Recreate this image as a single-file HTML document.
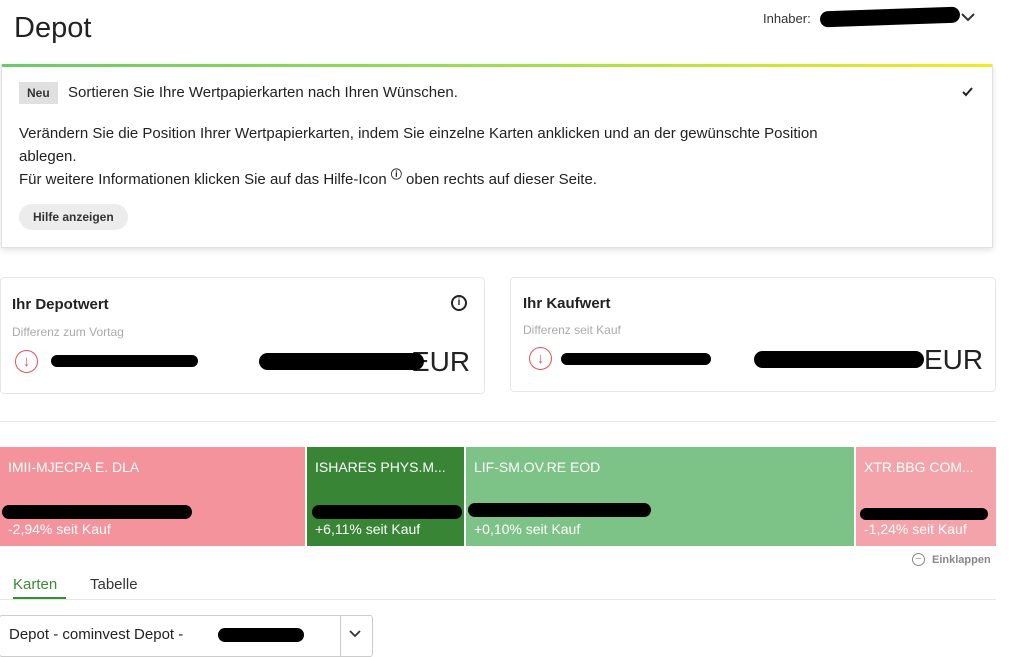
<!DOCTYPE html>
<html><head><meta charset="utf-8"><style>
body{margin:0;width:1026px;height:650px;background:#fff;font-family:"Liberation Sans",sans-serif;color:#222;position:relative;overflow:hidden}
.a{position:absolute}
.blk{position:absolute;background:#000;border-radius:10px}
.tile{position:absolute;top:447px;height:99px;color:#fff;font-size:14px}
.tile .n{position:absolute;left:8px;top:12px}
.tile .p{position:absolute;left:8px;top:74px}
</style></head><body>
<div class="a" style="left:14px;top:12px;font-size:29px;color:#222">Depot</div>
<div class="a" style="left:763px;top:11px;font-size:13px;color:#333">Inhaber:</div>
<div class="blk" style="left:820px;top:9px;width:140px;height:16px;transform:rotate(-2deg)"></div>
<svg class="a" style="left:961px;top:12px" width="14" height="10"><path d="M1 2l6 6 6-6" stroke="#333" stroke-width="2" fill="none"/></svg>

<div class="a" style="left:1px;top:64px;width:990px;height:183px;border:1px solid #e2e2e2;border-top:none;box-shadow:0 2px 6px rgba(0,0,0,.12)">
<div style="height:3px;background:linear-gradient(90deg,#6cc96a,#a0dd50,#f3ea22)"></div>
<div class="a" style="left:17px;top:18px;background:#e0e0e0;font-size:12px;font-weight:bold;padding:4px 8px;color:#333">Neu</div>
<div class="a" style="left:66px;top:20px;font-size:15px">Sortieren Sie Ihre Wertpapierkarten nach Ihren Wünschen.</div>
<svg class="a" style="left:959px;top:22px" width="14" height="12"><path d="M2 6l3 3 6-7" stroke="#222" stroke-width="2" fill="none"/></svg>
<div class="a" style="left:17px;top:58px;font-size:15px;line-height:23px;width:960px">Verändern Sie die Position Ihrer Wertpapierkarten, indem Sie einzelne Karten anklicken und an der gewünschte Position<br>ablegen.<br>Für weitere Informationen klicken Sie auf das Hilfe-Icon <sup style="font-size:11px;font-weight:bold;line-height:0">&#9432;</sup> oben rechts auf dieser Seite.</div>
<div class="a" style="left:17px;top:140px;background:#ececec;border-radius:14px;padding:6px 14px;font-size:12px;font-weight:bold;color:#333">Hilfe anzeigen</div>
</div>

<div class="a" style="left:0;top:277px;width:483px;height:115px;border:1px solid #e6e6e6;border-radius:4px">
<div class="a" style="left:11px;top:18px;font-size:15px;font-weight:bold">Ihr Depotwert</div>
<div class="a" style="left:450px;top:17px;width:12px;height:12px;border:2px solid #222;border-radius:50%;font-size:10px;font-weight:bold;text-align:center;line-height:12px">i</div>
<div class="a" style="left:11px;top:47px;font-size:12px;color:#aaa">Differenz zum Vortag</div>
<div class="a" style="left:14px;top:72px;width:21px;height:21px;border:1.5px solid #e8505b;border-radius:50%;color:#e8505b;text-align:center;font-size:15px;line-height:21px">↓</div>
<div class="blk" style="left:50px;top:77px;width:147px;height:12px"></div>
<div class="a" style="left:410px;top:68px;font-size:28px;color:#222">EUR</div>
<div class="blk" style="left:258px;top:75px;width:165px;height:17px"></div>
</div>
<div class="a" style="left:510px;top:277px;width:484px;height:113px;border:1px solid #e6e6e6;border-radius:4px">
<div class="a" style="left:12px;top:17px;font-size:15px;font-weight:bold">Ihr Kaufwert</div>
<div class="a" style="left:12px;top:45px;font-size:12px;color:#aaa">Differenz seit Kauf</div>
<div class="a" style="left:18px;top:69px;width:21px;height:21px;border:1.5px solid #e8505b;border-radius:50%;color:#e8505b;text-align:center;font-size:15px;line-height:21px">↓</div>
<div class="blk" style="left:50px;top:75px;width:150px;height:12px"></div>
<div class="a" style="left:413px;top:66px;font-size:28px;color:#222">EUR</div>
<div class="blk" style="left:243px;top:73px;width:170px;height:17px"></div>
</div>
<div class="a" style="left:0;top:421px;width:996px;height:1px;background:#e6e6e6"></div>

<div class="tile" style="left:0;width:305px;background:#f4939c"><div class="n">IMII-MJECPA E. DLA</div><div class="p">-2,94% seit Kauf</div></div>
<div class="tile" style="left:307px;width:157px;background:#388535"><div class="n">ISHARES PHYS.M...</div><div class="p">+6,11% seit Kauf</div></div>
<div class="tile" style="left:466px;width:388px;background:#7dc286"><div class="n">LIF-SM.OV.RE EOD</div><div class="p">+0,10% seit Kauf</div></div>
<div class="tile" style="left:856px;width:140px;background:#f4a3ab"><div class="n">XTR.BBG COM...</div><div class="p">-1,24% seit Kauf</div></div>
<div class="blk" style="left:2px;top:505px;width:190px;height:14px"></div>
<div class="blk" style="left:312px;top:505px;width:150px;height:14px"></div>
<div class="blk" style="left:468px;top:503px;width:183px;height:14px"></div>
<div class="blk" style="left:860px;top:508px;width:128px;height:12px"></div>

<div class="a" style="left:912px;top:553px;width:11px;height:11px;border:1.5px solid #888;border-radius:50%;color:#888;font-size:10px;line-height:10px;text-align:center">–</div>
<div class="a" style="left:932px;top:554px;font-size:11px;font-weight:bold;color:#888">Einklappen</div>
<div class="a" style="left:13px;top:576px;font-size:15px;color:#3b8a35">Karten</div>
<div class="a" style="left:13px;top:597px;width:53px;height:2px;background:#3b8a35"></div>
<div class="a" style="left:90px;top:576px;font-size:15px;color:#333">Tabelle</div>
<div class="a" style="left:0;top:599px;width:996px;height:1px;background:#e6e6e6"></div>
<div class="a" style="left:-1px;top:615px;width:372px;height:40px;border:1px solid #ccc;border-radius:3px">
<div class="a" style="left:9px;top:10px;font-size:15px">Depot - cominvest Depot -</div>
<div class="blk" style="left:218px;top:12px;width:86px;height:14px"></div>
<div class="a" style="left:340px;top:0;width:1px;height:40px;background:#ccc"></div>
<svg class="a" style="left:349px;top:13px" width="12" height="9"><path d="M1 2l5 5 5-5" stroke="#333" stroke-width="1.8" fill="none"/></svg>
</div>
</body></html>
